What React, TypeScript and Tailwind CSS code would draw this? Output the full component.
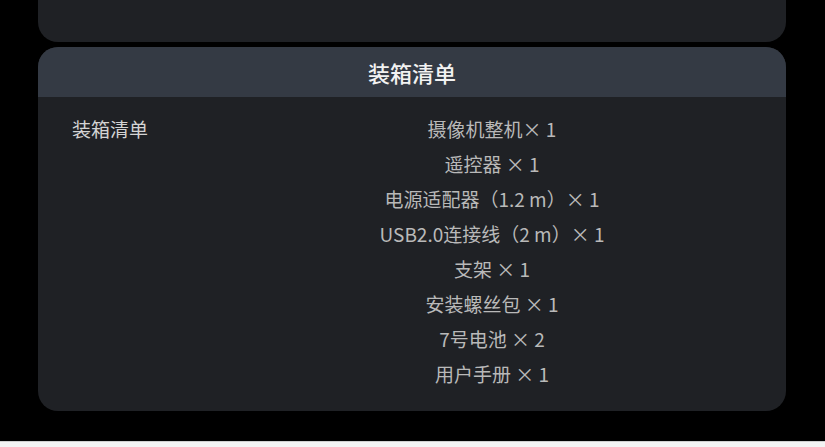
const items = [
  "摄像机整机× 1",
  "遥控器 × 1",
  "电源适配器（1.2 m）× 1",
  "USB2.0连接线（2 m）× 1",
  "支架 × 1",
  "安装螺丝包 × 1",
  "7号电池 × 2",
  "用户手册 × 1",
];

export default function App() {
  return (
    <div
      className="h-[447px] w-full bg-black flex flex-col overflow-hidden"
      style={{ fontFamily: '"Noto Sans CJK SC", "Noto Sans", sans-serif' }}
    >
      {/* tail of the previous card */}
      <div className="ml-[38px] w-[748px] h-[42px] shrink-0 bg-[#1f2125] rounded-b-[20px]" />

      <div className="ml-[38px] mt-[5px] w-[748px] shrink-0 rounded-[20px] overflow-hidden bg-[#1f2125]">
        <div className="h-[50px] bg-[#343a44] flex items-center justify-center text-[22px] font-medium text-[#f2f2f2]">
          装箱清单
        </div>
        <div className="flex pt-[14px] pb-[20px] pl-[34px] pr-[34px]">
          <div className="w-[160px] shrink-0 text-[19px] leading-[35px] text-[#d4d4d4]">装箱清单</div>
          <div className="flex-1 flex flex-col items-center text-[19px] leading-[35px] text-[#b9b9b9]">
            {items.map((it) => (
              <div key={it}>{it}</div>
            ))}
          </div>
        </div>
      </div>

      <div className="flex-1" />
      <div className="h-[1px] bg-[#cfcfcf] shrink-0" />
      <div className="h-[5px] bg-[#f3f3f3] shrink-0" />
    </div>
  );
}
